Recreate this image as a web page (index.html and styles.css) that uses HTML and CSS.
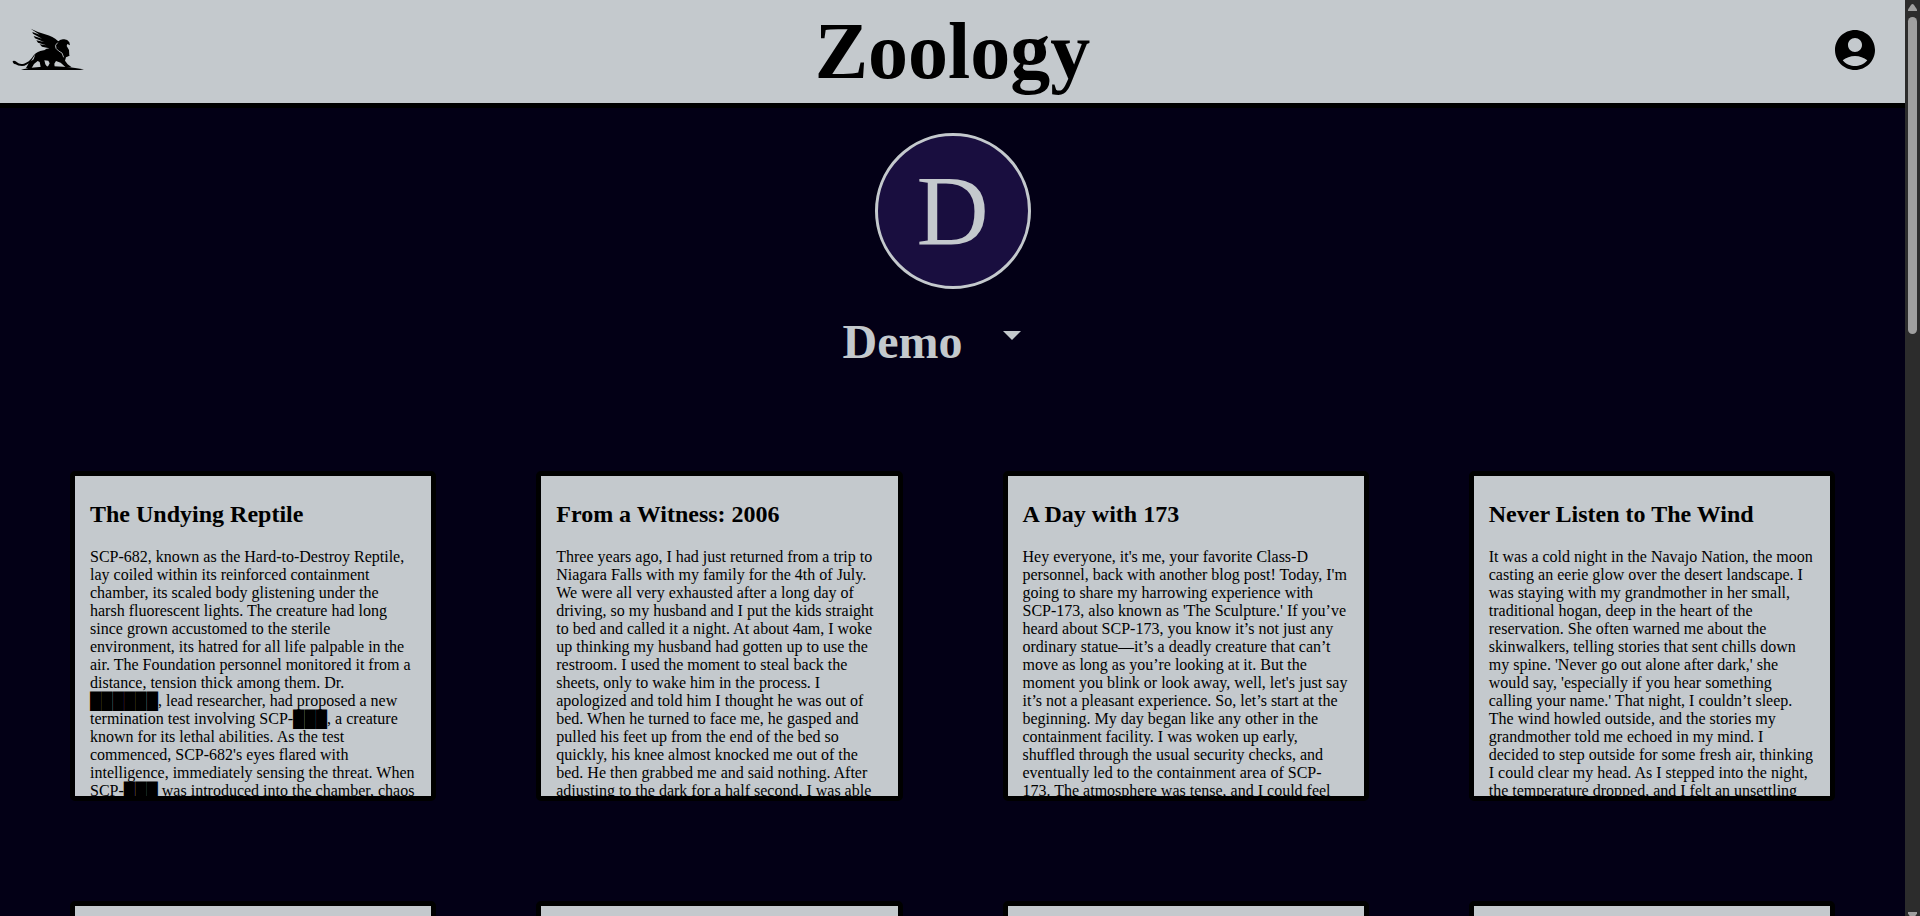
FILE: index.html
```html
<!DOCTYPE html>
<html lang="en">
<head>
<meta charset="utf-8">
<title>Zoology</title>
<link rel="stylesheet" href="styles.css">
</head>
<body>
<div class="page">
  <header class="header">
    <svg class="logo" viewBox="0 0 300 240" aria-label="Griffin">
      <path d="M63 179Q85 173 110 172Q150 167 190 170Q230 173 252 178L240 180H70Z"/>
      <path d="M38 153Q46 150 51 157Q58 164 72 161Q88 156 97 142Q106 127 121 123Q134 119 150 119L168 112L162 93L182 94L176 114L184 120L202 124L208 137L198 142L195 152L203 163L215 172H197L182 158L168 153L163 161L164 171H143L149 160L145 152L133 151L136 163L142 171H122L119 156L113 153L102 162L95 174H78L87 158L101 148L106 133Q100 142 94 152Q81 167 66 168Q53 168 47 163Q38 162 38 153Z"/>
      <path d="M92 56Q112 66 135 73Q160 80 173 92L176 97Q164 102 167 113L176 121L148 124L134 118L148 115L126 110L119 103L139 106L114 98L109 91L132 96L105 85L101 78L126 86L99 71L97 66L119 74Z"/>
      <path d="M174 96Q179 87 191 88Q202 87 208 97L210 106L202 102L200 108L207 120L208 138L196 139L181 125Q173 115 174 96Z"/>
      <path class="logo-line" d="M173 98Q163 105 168 115Q175 124 186 129L191 142"/>
    </svg>
    <h1 class="title">Zoology</h1>
    <svg class="account" viewBox="0 0 24 24" aria-label="Account"><path d="M12 2C6.48 2 2 6.48 2 12s4.480 10 10 10 10-4.480 10-10S17.520 2 12 2zm0 4c1.930 0 3.500 1.570 3.500 3.500S13.930 13 12 13s-3.500-1.570-3.500-3.500S10.070 6 12 6zm0 14c-2.030 0-4.430-.82-6.140-2.880C7.550 15.800 9.680 15 12 15s4.450.8 6.140 2.120C16.430 19.190 14.030 20 12 20z"/></svg>
  </header>
  <section class="profile">
    <div class="avatar">D</div>
    <div class="name-row">
      <h2 class="name">Demo</h2>
      <svg class="caret" viewBox="0 0 18 9"><path d="M0 0H18L9 9Z"/></svg>
    </div>
  </section>
  <main class="cards">
    <article class="card">
      <h2 class="card-title">The Undying Reptile</h2>
      <p class="card-text">SCP-682, known as the Hard-to-Destroy Reptile, lay coiled within its reinforced containment chamber, its scaled body glistening under the harsh fluorescent lights. The creature had long since grown accustomed to the sterile environment, its hatred for all life palpable in the air. The Foundation personnel monitored it from a distance, tension thick among them. Dr. ██████, lead researcher, had proposed a new termination test involving SCP-███, a creature known for its lethal abilities. As the test commenced, SCP-682's eyes flared with intelligence, immediately sensing the threat. When SCP-███ was introduced into the chamber, chaos</p>
    </article>
    <article class="card">
      <h2 class="card-title">From a Witness: 2006</h2>
      <p class="card-text">Three years ago, I had just returned from a trip to Niagara Falls with my family for the 4th of July. We were all very exhausted after a long day of driving, so my husband and I put the kids straight to bed and called it a night. At about 4am, I woke up thinking my husband had gotten up to use the restroom. I used the moment to steal back the sheets, only to wake him in the process. I apologized and told him I thought he was out of bed. When he turned to face me, he gasped and pulled his feet up from the end of the bed so quickly, his knee almost knocked me out of the bed. He then grabbed me and said nothing. After adjusting to the dark for a half second, I was able</p>
    </article>
    <article class="card">
      <h2 class="card-title">A Day with 173</h2>
      <p class="card-text">Hey everyone, it's me, your favorite Class-D personnel, back with another blog post! Today, I'm going to share my harrowing experience with SCP-173, also known as 'The Sculpture.' If you’ve heard about SCP-173, you know it’s not just any ordinary statue—it’s a deadly creature that can’t move as long as you’re looking at it. But the moment you blink or look away, well, let's just say it’s not a pleasant experience. So, let’s start at the beginning. My day began like any other in the containment facility. I was woken up early, shuffled through the usual security checks, and eventually led to the containment area of SCP-173. The atmosphere was tense, and I could feel</p>
    </article>
    <article class="card">
      <h2 class="card-title">Never Listen to The Wind</h2>
      <p class="card-text">It was a cold night in the Navajo Nation, the moon casting an eerie glow over the desert landscape. I was staying with my grandmother in her small, traditional hogan, deep in the heart of the reservation. She often warned me about the skinwalkers, telling stories that sent chills down my spine. 'Never go out alone after dark,' she would say, 'especially if you hear something calling your name.' That night, I couldn’t sleep. The wind howled outside, and the stories my grandmother told me echoed in my mind. I decided to step outside for some fresh air, thinking I could clear my head. As I stepped into the night, the temperature dropped, and I felt an unsettling</p>
    </article>
    <article class="card"></article>
    <article class="card"></article>
    <article class="card"></article>
    <article class="card"></article>
  </main>
</div>
<div class="scrollbar">
  <svg class="arrow" viewBox="0 0 9 7"><path d="M4.500 0Q5.300 0 6 1L9 5.500V7H0V5.500L3 1Q3.700 0 4.500 0Z"/></svg>
  <div class="thumb"></div>
  <svg class="arrow arrow-down" viewBox="0 0 9 7"><path d="M0 0H9V1.500L6 6Q4.500 8 3 6L0 1.500Z"/></svg>
</div>
</body>
</html>
```
FILE: styles.css
```css
* { box-sizing: border-box; }

body {
  margin: 0;
  height: 916px;
  overflow: hidden;
  display: flex;
  background: #030016;
  color: #000;
  font-family: "Liberation Serif", "Times New Roman", serif;
}

.page {
  flex: 1;
  min-width: 0;
  height: 916px;
  overflow: hidden;
}

.header {
  display: flex;
  justify-content: space-between;
  align-items: flex-start;
  height: 108px;
  padding-right: 26px;
  background: #c4c9cd;
  border-bottom: 5px solid #000;
}

.logo {
  width: 100px;
  height: 80px;
  margin: 10px 0 0;
}

.logo-line {
  fill: none;
  stroke: #c4c9cd;
  stroke-width: 2.5;
}

.title {
  margin: 5px 0 0 -26px;
  font-size: 80px;
  line-height: 92px;
}

.account {
  width: 48px;
  height: 48px;
  margin-top: 26px;
}

.profile {
  display: flex;
  flex-direction: column;
  align-items: center;
  height: 363px;
  padding-top: 25px;
  color: #c4c9cd;
}

.avatar {
  display: flex;
  align-items: center;
  justify-content: center;
  width: 156px;
  height: 156px;
  padding-bottom: 2px;
  border: 3px solid #c4c9cd;
  border-radius: 50%;
  background: #190e3f;
  font-size: 100px;
  line-height: 115px;
}

.name-row {
  display: flex;
  align-items: flex-start;
  gap: 41px;
  margin: 25px 0 0 -61px;
}

.name {
  margin: 0;
  font-size: 48px;
  line-height: 55px;
}

.caret {
  width: 18px;
  height: 9px;
  margin: 17px -20px 0 0;
  fill: #c4c9cd;
}

.cards {
  display: grid;
  grid-template-columns: repeat(4, 1fr);
  grid-auto-rows: 330px;
  gap: 100px;
  padding: 0 70px;
}

.card {
  overflow: hidden;
  padding: 5px 15px 0;
  background: #c4c9cd;
  border: 5px solid #000;
  border-radius: 5px;
}

.card-title {
  margin: 20px 0;
  font-size: 24px;
  line-height: 27px;
}

.card-text {
  margin: 0;
  font-size: 16px;
  line-height: 18px;
}

.scrollbar {
  display: flex;
  flex-direction: column;
  align-items: center;
  width: 15px;
  height: 916px;
  padding-top: 4px;
  background: #2c2c2c;
}

.arrow {
  width: 9px;
  height: 7px;
  fill: #9f9f9f;
}

.thumb {
  width: 9px;
  height: 317px;
  margin-top: 6px;
  border-radius: 5px;
  background: #9f9f9f;
}

.arrow-down {
  margin-top: auto;
  margin-bottom: -3px;
}
```
